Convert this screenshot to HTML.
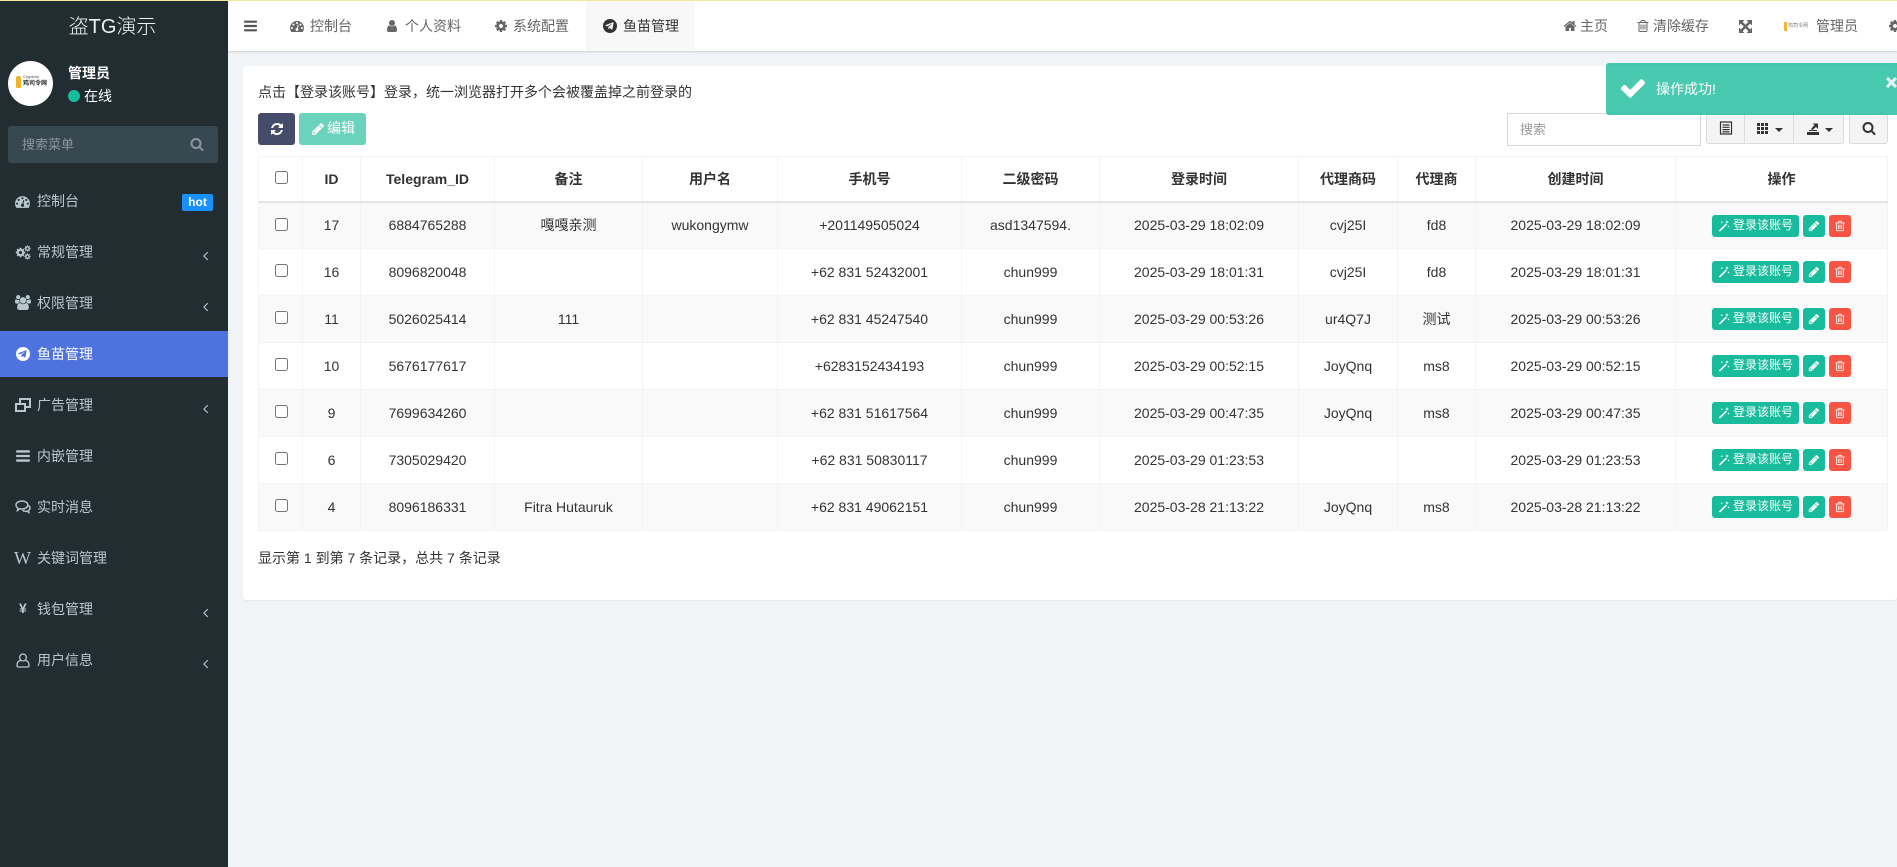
<!DOCTYPE html>
<html lang="zh-CN"><head><meta charset="utf-8"><title>鱼苗管理</title>
<style>
*{box-sizing:border-box}
html,body{margin:0;padding:0;width:1897px;height:867px;overflow:hidden;background:#f1f4f6;font:14px/20px "Liberation Sans","Noto Sans CJK SC",sans-serif;color:#333}
.a{position:absolute;white-space:nowrap}
svg{position:absolute;fill:currentColor;display:block}
#top{left:0;top:0;width:1897px;height:1px;background:#f5e6a2;z-index:5}
#side{left:0;top:0;width:228px;height:867px;background:#222d32;color:#b8c7ce}
#head{left:228px;top:0;width:1669px;height:51px;background:#fff;box-shadow:0 1px 2px rgba(0,0,0,.16);z-index:2}
.nav{color:#666;top:16px}
.m{left:37px;color:#b8c7ce;line-height:20px}
.chev{left:198px;width:15px;height:15px;color:#b8c7ce}
#panel{left:243px;top:66px;width:1654px;height:534px;background:#fff;border-radius:3px;box-shadow:0 1px 1px rgba(0,0,0,.05)}
table{position:absolute;left:258px;top:156px;width:1629px;border-collapse:collapse;table-layout:fixed;background:#fff}
th,td{border:1px solid #f4f4f4;text-align:center;padding:0;font-weight:normal;vertical-align:middle;position:relative}
th{height:45px;font-weight:bold;color:#333;border-bottom:2px solid #e4e4e4}
td{height:47px}
tbody tr:nth-child(odd) td{background:#f9f9f9}
.cb{position:absolute;left:15.5px;width:13px;height:13px;border:1px solid #767676;border-radius:2.5px;background:#fff;top:14px}
td .cb{top:15px}
.ops{position:absolute;left:36px;top:12px;width:140px;height:22px}
.b{position:absolute;top:0;height:22px;border-radius:3px;color:#fff}
.b1{left:0;width:87px;background:#18bc9c;font-size:12px;line-height:21px;padding-left:21px;text-align:left}
.b2{left:91px;width:22px;background:#18bc9c}
.b3{left:117px;width:22px;background:#f75444}
#toast{left:1606px;top:63px;width:291px;height:52px;background:rgba(26,188,156,.8);border-radius:3px 0 0 3px;z-index:4;color:#fff}
.tb{background:#f4f4f4;border:1px solid #dcdcdc;top:113px;height:31px;color:#333}
.caret{position:absolute;width:0;height:0;border-left:4px solid transparent;border-right:4px solid transparent;border-top:4px solid #333}
</style></head><body>
<svg width="0" height="0" style="position:absolute">
<symbol id="bars" viewBox="0 0 1792 1792"><path d="M1664 1344v128q0 26-19 45t-45 19h-1408q-26 0-45-19t-19-45v-128q0-26 19-45t45-19h1408q26 0 45 19t19 45zm0-512v128q0 26-19 45t-45 19h-1408q-26 0-45-19t-19-45v-128q0-26 19-45t45-19h1408q26 0 45 19t19 45zm0-512v128q0 26-19 45t-45 19h-1408q-26 0-45-19t-19-45v-128q0-26 19-45t45-19h1408q26 0 45 19t19 45z"/></symbol>
<symbol id="user" viewBox="0 0 1792 1792"><path d="M1536 1399q0 109-62.500 187t-150.500 78h-854q-88 0-150.500-78t-62.500-187q0-85 8.500-160.500t31.500-152 58.500-131 94-89 134.500-34.500q131 128 313 128t313-128q76 0 134.500 34.500t94 89 58.500 131 31.500 152 8.500 160.500zm-256-887q0 159-112.500 271.500t-271.500 112.500-271.500-112.500-112.500-271.500 112.500-271.500 271.500-112.500 271.500 112.500 112.500 271.500z"/></symbol>
<symbol id="search" viewBox="0 0 1792 1792"><path d="M1216 832q0-185-131.500-316.500t-316.500-131.500-316.500 131.500-131.500 316.500 131.500 316.500 316.500 131.500 316.500-131.500 131.500-316.500zm512 832q0 52-38 90t-90 38q-54 0-90-38l-343-342q-179 124-399 124-143 0-273.500-55.500t-225-150-150-225-55.500-273.500 55.500-273.500 150-225 225-150 273.500-55.500 273.500 55.500 225 150 150 225 55.500 273.500q0 220-124 399l343 343q37 37 37 90z"/></symbol>
<symbol id="pencil" viewBox="0 0 1792 1792"><path d="M491 1536l91-91-235-235-91 91v107h128v128h107zm523-928q0-22-22-22-10 0-17 7l-542 542q-7 7-7 17 0 22 22 22 10 0 17-7l542-542q7-7 7-17zm-54-192l416 416-832 832h-416v-416zm683 96q0 53-37 90l-166 166-416-416 166-165q36-38 90-38 53 0 91 38l235 234q37 39 37 91z"/></symbol>
<symbol id="trash" viewBox="0 0 1792 1792"><path d="M704 736v576q0 14-9 23t-23 9h-64q-14 0-23-9t-9-23v-576q0-14 9-23t23-9h64q14 0 23 9t9 23zm256 0v576q0 14-9 23t-23 9h-64q-14 0-23-9t-9-23v-576q0-14 9-23t23-9h64q14 0 23 9t9 23zm256 0v576q0 14-9 23t-23 9h-64q-14 0-23-9t-9-23v-576q0-14 9-23t23-9h64q14 0 23 9t9 23zm128 724v-948h-896v948q0 22 7 40.500t14.500 27 10.500 8.500h832q3 0 10.500-8.500t14.500-27 7-40.500zm-672-1076h448l-48-117q-7-9-17-11h-317q-10 2-17 11zm928 32v64q0 14-9 23t-23 9h-96v948q0 83-47 143.500t-113 60.500h-832q-66 0-113-58.500t-47-141.500v-952h-96q-14 0-23-9t-9-23v-64q0-14 9-23t23-9h309l70-167q15-37 54-63t79-26h320q40 0 79 26t54 63l70 167h309q14 0 23 9t9 23z"/></symbol>
<symbol id="home" viewBox="0 0 1792 1792"><path d="M1472 992v480q0 26-19 45t-45 19h-384v-384h-256v384h-384q-26 0-45-19t-19-45v-480q0-1 .5-3t.5-3l575-474 575 474q1 2 1 6zm223-69l-62 74q-8 9-21 11h-3q-13 0-21-7l-692-577-692 577q-12 8-24 7-13-2-21-11l-62-74q-8-10-7-23.500t11-21.500l719-599q32-26 76-26t76 26l244 204v-195q0-14 9-23t23-9h192q14 0 23 9t9 23v408l219 182q10 8 11 21.500t-7 23.500z"/></symbol>
<symbol id="cog" viewBox="0 0 1792 1792"><path d="M1152 896q0-106-75-181t-181-75-181 75-75 181 75 181 181 75 181-75 75-181zm512-109v222q0 12-8 23t-20 13l-185 28q-19 54-39 91 35 50 107 138 10 12 10 25t-9 23q-27 37-99 108t-94 71q-12 0-26-9l-138-108q-44 23-91 38-16 136-29 186-7 28-36 28h-222q-14 0-24.500-8.500t-11.500-21.500l-28-184q-49-16-90-37l-141 107q-10 9-25 9-14 0-25-11-126-114-165-168-7-10-7-23 0-12 8-23 15-21 51-66.500t54-70.500q-27-50-41-99l-183-27q-13-2-21-12.500t-8-23.500v-222q0-12 8-23t19-13l186-28q14-46 39-92-40-57-107-138-10-12-10-24 0-10 9-23 26-36 98.500-107.500t94.500-71.500q13 0 26 10l138 107q44-23 91-38 16-136 29-186 7-28 36-28h222q14 0 24.500 8.500t11.500 21.500l28 184q49 16 90 37l142-107q9-9 24-9 13 0 25 10 129 119 165 170 7 8 7 22 0 12-8 23-15 21-51 66.500t-54 70.500q26 50 41 98l183 28q13 2 21 12.500t8 23.500z"/></symbol>
<symbol id="dash" viewBox="0 0 1792 1792"><path d="M384 1152q0-53-37.500-90.500t-90.500-37.500-90.500 37.500-37.500 90.500 37.500 90.500 90.500 37.500 90.500-37.500 37.500-90.500zm192-448q0-53-37.500-90.500t-90.500-37.500-90.500 37.500-37.500 90.500 37.500 90.500 90.500 37.500 90.500-37.500 37.500-90.500zm428 481l101-382q6-26-7.500-48.500t-38.500-29.500-48 6.500-30 39.500l-101 382q-60 5-107 43.500t-63 98.500q-20 77 20 146t117 89 146-20 89-117q16-60-6-117t-72-91zm660-33q0-53-37.500-90.500t-90.500-37.500-90.500 37.500-37.500 90.500 37.500 90.500 90.500 37.500 90.500-37.500 37.500-90.500zm-640-640q0-53-37.500-90.500t-90.500-37.500-90.500 37.500-37.500 90.500 37.500 90.500 90.500 37.500 90.500-37.500 37.500-90.500zm448 192q0-53-37.500-90.500t-90.500-37.500-90.500 37.500-37.500 90.500 37.500 90.500 90.500 37.500 90.500-37.500 37.500-90.500zm320 448q0 261-141 483-19 29-54 29h-1402q-35 0-54-29-141-221-141-483 0-182 71-348t191-286 286-191 348-71 348 71 286 191 191 286 71 348z"/></symbol>
<symbol id="refresh" viewBox="0 0 1792 1792"><path d="M1639 1056q0 5-1 7-64 268-268 434.500t-478 166.500q-146 0-282.500-55t-243.500-157l-129 129q-19 19-45 19t-45-19-19-45v-448q0-26 19-45t45-19h448q26 0 45 19t19 45-19 45l-137 137q71 66 161 102t187 36q134 0 250-65t186-179q11-17 53-117 8-23 30-23h192q13 0 22.500 9.500t9.500 22.500zm25-800v448q0 26-19 45t-45 19h-448q-26 0-45-19t-19-45 19-45l138-138q-148-137-349-137-134 0-250 65t-186 179q-11 17-53 117-8 23-30 23h-199q-13 0-22.500-9.500t-9.500-22.500v-7q65-268 270-434.500t480-166.500q146 0 284 55.500t245 156.500l130-129q19-19 45-19t45 19 19 45z"/></symbol>
<symbol id="check" viewBox="0 0 1792 1792"><path d="M1671 566q0 40-28 68l-724 724-136 136q-28 28-68 28t-68-28l-136-136-362-362q-28-28-28-68t28-68l136-136q28-28 68-28t68 28l294 295 656-657q28-28 68-28t68 28l136 136q28 28 28 68z"/></symbol>
<symbol id="left" viewBox="0 0 1792 1792"><path d="M1203 544q0 13-10 23l-393 393 393 393q10 10 10 23t-10 23l-50 50q-10 10-23 10t-23-10l-466-466q-10-10-10-23t10-23l466-466q10-10 23-10t23 10l50 50q10 10 10 23z"/></symbol>
<symbol id="users" viewBox="0 0 1920 1792"><path d="M593 896q-162 5-265 128h-134q-82 0-138-40.500t-56-118.500q0-353 124-353 6 0 43.500 21t97.500 42.500 119 21.500q67 0 133-23-5 37-5 66 0 139 81 256zm1071 637q0 120-73 189.500t-194 69.500h-874q-121 0-194-69.500t-73-189.500q0-53 3.500-103.500t14-109 26.500-108.500 43-97.500 62-81 85.500-53.500 111.500-20q10 0 43 21.500t73 48 107 48 135 21.500 135-21.500 107-48 73-48 43-21.500q61 0 111.500 20t85.500 53.500 62 81 43 97.500 26.500 108.500 14 109 3.500 103.500zm-1024-1277q0 106-75 181t-181 75-181-75-75-181 75-181 181-75 181 75 75 181zm704 384q0 159-112.500 271.500t-271.500 112.500-271.500-112.500-112.500-271.500 112.500-271.500 271.500-112.500 271.500 112.500 112.500 271.500zm576 225q0 78-56 118.500t-138 40.500h-134q-103-123-265-128 81-117 81-256 0-29-5-66 66 23 133 23 59 0 119-21.500t97.500-42.500 43.500-21q124 0 124 353zm-128-609q0 106-75 181t-181 75-181-75-75-181 75-181 181-75 181 75 75 181z"/></symbol>
<symbol id="tg" viewBox="0 0 24 24"><path fill-rule="evenodd" d="M12 0a12 12 0 1 0 0 24a12 12 0 0 0 0-24zM18.300 6.500L16.100 17.500q-.3 1-1.300.5l-3.300-2.500-1.700 1.600q-.4.400-.8.100l.3-3.500 6.300-5.700q.4-.4-.1-.3l-7.800 4.900-3.400-1.100q-1-.4 0-.9l13-5q1-.3 1 .9z"/></symbol>
<symbol id="magic" viewBox="0 0 14 14"><path d="M1 12.300L9.200 4.100l1.300 1.300L2.300 13.600zM10.500 0l.6 1.700 1.700.6-1.700.6-.6 1.700-.6-1.700-1.700-.6 1.700-.6zM4.500 1l.4 1.100 1.100.4-1.100.4-.4 1.100-.4-1.100L3 2.500l1.100-.4zM12.300 6l.4 1.100 1.100.4-1.100.4-.4 1.100-.4-1.100-1.100-.4 1.100-.4z"/></symbol>
</svg>

<div class="a" id="top"></div>

<div class="a" id="side">
  <div class="a" style="left:0;top:15px;width:225px;text-align:center;font-size:20px;line-height:24px;color:#eef2f3;font-weight:300">盗TG演示</div>
  <div class="a" style="left:8px;top:61px;width:45px;height:45px;border-radius:50%;background:#fff;overflow:hidden">
    <div class="a" style="left:8px;top:15px;width:5px;height:12px;background:#f0b429;border-radius:2px 2px 1px 1px"></div>
    <div class="a" style="left:15px;top:13px;font-size:4px;line-height:5px;color:#444">Crypfunc</div>
    <div class="a" style="left:15px;top:19px;font-size:6px;line-height:8px;color:#222;font-weight:bold">鸡司令网</div>
  </div>
  <div class="a" style="left:68px;top:63px;color:#fff;font-weight:bold;font-size:14px">管理员</div>
  <div class="a" style="left:68px;top:90px;width:12px;height:12px;border-radius:50%;background:#18bc9c"></div>
  <div class="a" style="left:84px;top:86px;color:#fff;font-size:14px">在线</div>
  <div class="a" style="left:8px;top:126px;width:210px;height:37px;background:#374850;border-radius:3px"></div>
  <div class="a" style="left:22px;top:134px;font-size:13px;color:#8b979c;margin-top:1px">搜索菜单</div>
  <svg style="left:190px;top:137px;color:#8b979c" width="14" height="14"><use href="#search"/></svg>

  <svg style="left:15px;top:194px" width="15" height="15"><use href="#dash"/></svg>
  <div class="a m" style="top:191px">控制台</div>
  <div class="a" style="left:182px;top:194px;width:31px;height:17px;background:#1890ff;border-radius:2px;color:#fff;font-weight:bold;font-size:12px;line-height:16px;text-align:center">hot</div>

  <svg style="left:15px;top:247px" width="11" height="11"><use href="#cog"/></svg>
  <svg style="left:24px;top:245px" width="7" height="7"><use href="#cog"/></svg>
  <svg style="left:24px;top:253px" width="7" height="7"><use href="#cog"/></svg>
  <div class="a m" style="top:242px">常规管理</div>
  <svg class="chev" style="top:248px"><use href="#left"/></svg>

  <svg style="left:15px;top:295px" width="16" height="15"><use href="#users"/></svg>
  <div class="a m" style="top:293px">权限管理</div>
  <svg class="chev" style="top:299px"><use href="#left"/></svg>

  <div class="a" style="left:0;top:331px;width:228px;height:46px;background:#4e73df"></div>
  <svg style="left:16px;top:347px;color:#fff" width="14" height="14"><use href="#tg"/></svg>
  <div class="a m" style="top:344px;color:#fff">鱼苗管理</div>

  <svg style="left:15px;top:398px" width="16" height="14" viewBox="0 0 16 14" fill="none"><path fill="none" stroke="#b8c7ce" stroke-width="2" d="M5 5V1h10v8h-4M1 6h9v7H1z"/></svg>
  <div class="a m" style="top:395px">广告管理</div>
  <svg class="chev" style="top:401px"><use href="#left"/></svg>

  <svg style="left:15px;top:448px" width="16" height="16"><use href="#bars"/></svg>
  <div class="a m" style="top:446px">内嵌管理</div>

  <svg style="left:15px;top:500px" width="16" height="14" viewBox="0 0 16 14"><path fill="none" stroke="#b8c7ce" stroke-width="1.400" d="M7 1c3.300 0 5.800 1.700 5.800 4s-2.500 4-5.800 4c-.8 0-1.500-.1-2.200-.3L2.500 10.500l.5-2.300C1.700 7.500 1 6.300 1 5c0-2.300 2.700-4 6-4z"/><path fill="none" stroke="#b8c7ce" stroke-width="1.400" d="M13.500 5.500c1 .7 1.500 1.500 1.500 2.500 0 1-.6 1.900-1.600 2.500l.5 2-2.100-1.300c-1.700.3-3.200 0-4.300-1"/></svg>
  <div class="a m" style="top:497px">实时消息</div>

  <div class="a" style="left:14px;top:548px;font:18px/20px 'Liberation Serif',serif;color:#b8c7ce">W</div>
  <div class="a m" style="top:548px">关键词管理</div>

  <div class="a" style="left:19px;top:598px;font-weight:bold;font-size:14px;color:#b8c7ce">¥</div>
  <div class="a m" style="top:599px">钱包管理</div>
  <svg class="chev" style="top:605px"><use href="#left"/></svg>

  <svg style="left:16px;top:653px" width="14" height="15" viewBox="0 0 14 15"><path fill="none" stroke="#b8c7ce" stroke-width="1.300" d="M7 1a3.300 3.300 0 0 1 3.300 3.500A3.300 3.300 0 0 1 7 8a3.300 3.300 0 0 1-3.300-3.500A3.300 3.300 0 0 1 7 1zM4.500 7.500C2.300 8 1 9 1 12v.5C1 13.500 1.600 14 2.500 14h9c.9 0 1.500-.5 1.500-1.500V12c0-3-1.300-4-3.500-4.500"/></svg>
  <div class="a m" style="top:650px">用户信息</div>
  <svg class="chev" style="top:656px"><use href="#left"/></svg>
</div>

<div class="a" id="head"></div>
<div style="position:absolute;left:0;top:0;z-index:3">
  <svg style="left:243px;top:18px;color:#555" width="15" height="16"><use href="#bars"/></svg>
  <svg style="left:290px;top:19px;color:#666" width="14" height="14"><use href="#dash"/></svg>
  <div class="a nav" style="left:310px">控制台</div>
  <svg style="left:385px;top:19px;color:#666" width="14" height="14"><use href="#user"/></svg>
  <div class="a nav" style="left:405px">个人资料</div>
  <svg style="left:494px;top:19px;color:#666" width="14" height="14"><use href="#cog"/></svg>
  <div class="a nav" style="left:513px">系统配置</div>
  <div class="a" style="left:586px;top:1px;width:109px;height:50px;background:#f8f8f8"></div>
  <svg style="left:603px;top:19px;color:#333" width="14" height="14"><use href="#tg"/></svg>
  <div class="a nav" style="left:623px;color:#333">鱼苗管理</div>

  <svg style="left:1563px;top:19px;color:#666" width="14" height="14"><use href="#home"/></svg>
  <div class="a nav" style="left:1580px">主页</div>
  <svg style="left:1636px;top:19px;color:#666" width="14" height="14"><use href="#trash"/></svg>
  <div class="a nav" style="left:1653px">清除缓存</div>
  <svg style="left:1739px;top:20px;color:#666" width="13" height="13" viewBox="0 0 13 13"><path d="M0 0h5.500L0 5.500zM13 0v5.500L7.500 0zM0 13V7.500L5.500 13zM13 13H7.500L13 7.500z"/><path fill="none" stroke="#666" stroke-width="2.600" d="M2 2l9 9M11 2l-9 9"/></svg>
  <div class="a" style="left:1784px;top:22px;width:3px;height:9px;background:#f2b632"></div>
  <div class="a" style="left:1788px;top:21px;font-size:5px;line-height:10px;color:#777;letter-spacing:0">鸡司令网</div>
  <div class="a nav" style="left:1816px">管理员</div>
  <svg style="left:1888px;top:19px;color:#666" width="14" height="14"><use href="#cog"/></svg>
</div>

<div class="a" id="panel"></div>
<div class="a" style="left:258px;top:82px">点击【登录该账号】登录，统一浏览器打开多个会被覆盖掉之前登录的</div>
<div class="a" style="left:258px;top:113px;width:37px;height:32px;background:#444c69;border-radius:3px;color:#fff"><svg style="left:12px;top:9px" width="14" height="14"><use href="#refresh"/></svg></div>
<div class="a" style="left:299px;top:113px;width:67px;height:32px;background:#6bd3bb;border-radius:3px;color:#fff;line-height:31px;padding-left:28px;font-size:14px"><svg style="left:12px;top:9px" width="14" height="14"><use href="#pencil"/></svg>编辑</div>

<div class="a" style="left:1507px;top:113px;width:194px;height:33px;background:#fff;border:1px solid #d2d6de;color:#999;font-size:13px;line-height:31px;padding-left:12px">搜索</div>
<div class="a tb" style="left:1706px;width:39px;border-radius:3px 0 0 3px"><svg style="left:12px;top:7px" width="14" height="14" viewBox="0 0 14 14"><path fill="none" stroke="#333" stroke-width="1.200" d="M1.500 1h11v12h-11zM3.500 4h7M3.500 6.300h7M3.500 8.600h7M3.500 10.900h7"/></svg></div>
<div class="a tb" style="left:1744px;width:50px"><svg style="left:11px;top:7px" width="13" height="14" viewBox="0 0 13 14"><path d="M1 2h3v3H1zM5 2h3v3H5zM9 2h3v3H9zM1 6h3v3H1zM5 6h3v3H5zM9 6h3v3H9zM1 10h3v3H1zM5 10h3v3H5zM9 10h3v3H9z"/></svg><span class="caret" style="left:30px;top:14px"></span></div>
<div class="a tb" style="left:1793px;width:51px;border-radius:0 3px 3px 0"><svg style="left:12px;top:7px" width="14" height="14" viewBox="0 0 14 14"><path d="M1 11h12v3H1zM3 9h8v1H3zM5 8L8.500 4 6.500 2.500H12V8L10 6 6.500 9z"/></svg><span class="caret" style="left:31px;top:14px"></span></div>
<div class="a tb" style="left:1849px;width:39px;border-radius:3px"><svg style="left:12px;top:7px" width="14" height="14"><use href="#search"/></svg></div>

<table>
<colgroup><col style="width:44px"><col style="width:58px"><col style="width:134px"><col style="width:148px"><col style="width:135px"><col style="width:184px"><col style="width:138px"><col style="width:199px"><col style="width:99px"><col style="width:78px"><col style="width:200px"><col style="width:212px"></colgroup>
<thead><tr><th><span class="cb"></span></th><th>ID</th><th>Telegram_ID</th><th>备注</th><th>用户名</th><th>手机号</th><th>二级密码</th><th>登录时间</th><th>代理商码</th><th>代理商</th><th>创建时间</th><th>操作</th></tr></thead>
<tbody>
<tr><td><span class="cb"></span></td><td>17</td><td>6884765288</td><td>嘎嘎亲测</td><td>wukongymw</td><td>+201149505024</td><td>asd1347594.</td><td>2025-03-29 18:02:09</td><td>cvj25I</td><td>fd8</td><td>2025-03-29 18:02:09</td><td><div class="ops"><div class="b b1"><svg style="left:6px;top:5px" width="12" height="12"><use href="#magic"/></svg>登录该账号</div><div class="b b2"><svg style="left:5px;top:5px" width="12" height="12"><use href="#pencil"/></svg></div><div class="b b3"><svg style="left:5px;top:5px" width="12" height="12"><use href="#trash"/></svg></div></div></td></tr>
<tr><td><span class="cb"></span></td><td>16</td><td>8096820048</td><td></td><td></td><td>+62 831 52432001</td><td>chun999</td><td>2025-03-29 18:01:31</td><td>cvj25I</td><td>fd8</td><td>2025-03-29 18:01:31</td><td><div class="ops"><div class="b b1"><svg style="left:6px;top:5px" width="12" height="12"><use href="#magic"/></svg>登录该账号</div><div class="b b2"><svg style="left:5px;top:5px" width="12" height="12"><use href="#pencil"/></svg></div><div class="b b3"><svg style="left:5px;top:5px" width="12" height="12"><use href="#trash"/></svg></div></div></td></tr>
<tr><td><span class="cb"></span></td><td>11</td><td>5026025414</td><td>111</td><td></td><td>+62 831 45247540</td><td>chun999</td><td>2025-03-29 00:53:26</td><td>ur4Q7J</td><td>测试</td><td>2025-03-29 00:53:26</td><td><div class="ops"><div class="b b1"><svg style="left:6px;top:5px" width="12" height="12"><use href="#magic"/></svg>登录该账号</div><div class="b b2"><svg style="left:5px;top:5px" width="12" height="12"><use href="#pencil"/></svg></div><div class="b b3"><svg style="left:5px;top:5px" width="12" height="12"><use href="#trash"/></svg></div></div></td></tr>
<tr><td><span class="cb"></span></td><td>10</td><td>5676177617</td><td></td><td></td><td>+6283152434193</td><td>chun999</td><td>2025-03-29 00:52:15</td><td>JoyQnq</td><td>ms8</td><td>2025-03-29 00:52:15</td><td><div class="ops"><div class="b b1"><svg style="left:6px;top:5px" width="12" height="12"><use href="#magic"/></svg>登录该账号</div><div class="b b2"><svg style="left:5px;top:5px" width="12" height="12"><use href="#pencil"/></svg></div><div class="b b3"><svg style="left:5px;top:5px" width="12" height="12"><use href="#trash"/></svg></div></div></td></tr>
<tr><td><span class="cb"></span></td><td>9</td><td>7699634260</td><td></td><td></td><td>+62 831 51617564</td><td>chun999</td><td>2025-03-29 00:47:35</td><td>JoyQnq</td><td>ms8</td><td>2025-03-29 00:47:35</td><td><div class="ops"><div class="b b1"><svg style="left:6px;top:5px" width="12" height="12"><use href="#magic"/></svg>登录该账号</div><div class="b b2"><svg style="left:5px;top:5px" width="12" height="12"><use href="#pencil"/></svg></div><div class="b b3"><svg style="left:5px;top:5px" width="12" height="12"><use href="#trash"/></svg></div></div></td></tr>
<tr><td><span class="cb"></span></td><td>6</td><td>7305029420</td><td></td><td></td><td>+62 831 50830117</td><td>chun999</td><td>2025-03-29 01:23:53</td><td></td><td></td><td>2025-03-29 01:23:53</td><td><div class="ops"><div class="b b1"><svg style="left:6px;top:5px" width="12" height="12"><use href="#magic"/></svg>登录该账号</div><div class="b b2"><svg style="left:5px;top:5px" width="12" height="12"><use href="#pencil"/></svg></div><div class="b b3"><svg style="left:5px;top:5px" width="12" height="12"><use href="#trash"/></svg></div></div></td></tr>
<tr><td><span class="cb"></span></td><td>4</td><td>8096186331</td><td>Fitra Hutauruk</td><td></td><td>+62 831 49062151</td><td>chun999</td><td>2025-03-28 21:13:22</td><td>JoyQnq</td><td>ms8</td><td>2025-03-28 21:13:22</td><td><div class="ops"><div class="b b1"><svg style="left:6px;top:5px" width="12" height="12"><use href="#magic"/></svg>登录该账号</div><div class="b b2"><svg style="left:5px;top:5px" width="12" height="12"><use href="#pencil"/></svg></div><div class="b b3"><svg style="left:5px;top:5px" width="12" height="12"><use href="#trash"/></svg></div></div></td></tr>
</tbody></table>

<div class="a" style="left:258px;top:548px">显示第 1 到第 7 条记录，总共 7 条记录</div>

<div class="a" id="toast">
  <svg style="left:13px;top:11px" width="28" height="28"><use href="#check"/></svg>
  <div class="a" style="left:50px;top:16px">操作成功!</div>
  <svg style="left:280px;top:14px;opacity:.85" width="11" height="11" viewBox="0 0 11 11"><path fill="none" stroke="#fff" stroke-width="3" d="M1 1l9 9M10 1L1 10"/></svg>
</div>
</body></html>
